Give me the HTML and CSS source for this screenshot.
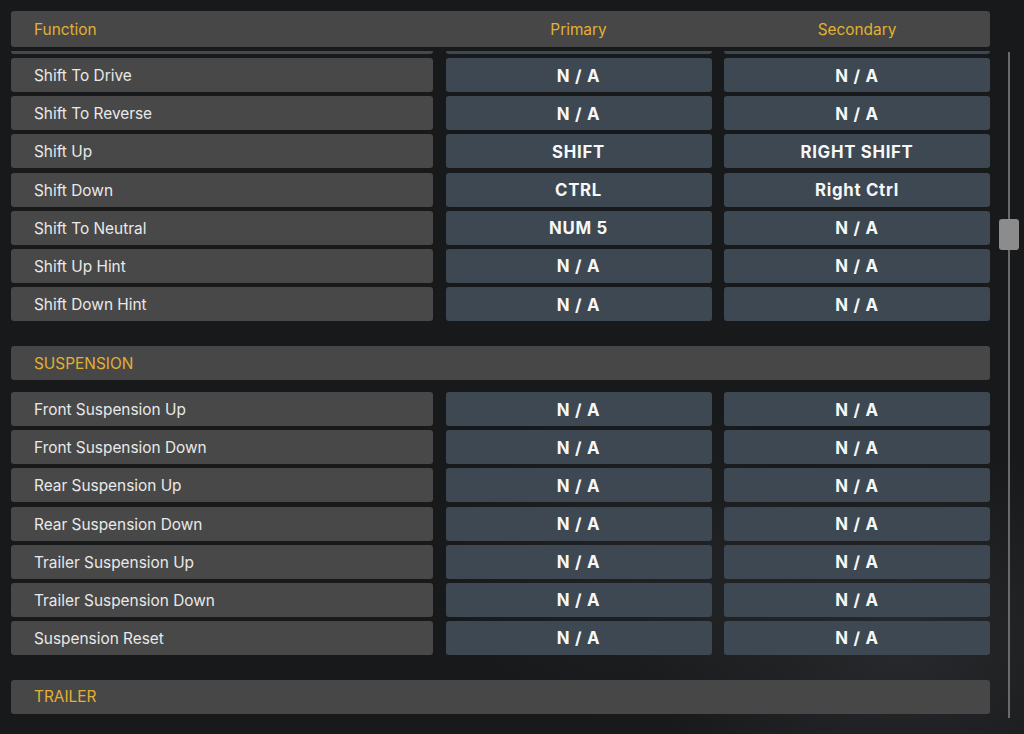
FILE: index.html
```html
<!DOCTYPE html>
<html>
<head>
<meta charset="utf-8">
<link rel="stylesheet" href="styles.css">
</head>
<body>
<div class="page">
  <div class="main">
    <div class="head grid">
      <div class="h-func">Function</div>
      <div class="h-key">Primary</div>
      <div class="h-key">Secondary</div>
    </div>
    <div class="viewport">
      <div class="list">
        <div class="row grid"><div class="fn"></div><div class="key"></div><div class="key"></div></div>
        <div class="row grid"><div class="fn">Shift To Drive</div><div class="key">N / A</div><div class="key">N / A</div></div>
        <div class="row grid"><div class="fn">Shift To Reverse</div><div class="key">N / A</div><div class="key">N / A</div></div>
        <div class="row grid"><div class="fn">Shift Up</div><div class="key">SHIFT</div><div class="key">RIGHT SHIFT</div></div>
        <div class="row grid"><div class="fn">Shift Down</div><div class="key">CTRL</div><div class="key">Right Ctrl</div></div>
        <div class="row grid"><div class="fn">Shift To Neutral</div><div class="key">NUM 5</div><div class="key">N / A</div></div>
        <div class="row grid"><div class="fn">Shift Up Hint</div><div class="key">N / A</div><div class="key">N / A</div></div>
        <div class="row grid"><div class="fn">Shift Down Hint</div><div class="key">N / A</div><div class="key">N / A</div></div>
        <div class="section">SUSPENSION</div>
        <div class="row grid"><div class="fn">Front Suspension Up</div><div class="key">N / A</div><div class="key">N / A</div></div>
        <div class="row grid"><div class="fn">Front Suspension Down</div><div class="key">N / A</div><div class="key">N / A</div></div>
        <div class="row grid"><div class="fn">Rear Suspension Up</div><div class="key">N / A</div><div class="key">N / A</div></div>
        <div class="row grid"><div class="fn">Rear Suspension Down</div><div class="key">N / A</div><div class="key">N / A</div></div>
        <div class="row grid"><div class="fn">Trailer Suspension Up</div><div class="key">N / A</div><div class="key">N / A</div></div>
        <div class="row grid"><div class="fn">Trailer Suspension Down</div><div class="key">N / A</div><div class="key">N / A</div></div>
        <div class="row grid"><div class="fn">Suspension Reset</div><div class="key">N / A</div><div class="key">N / A</div></div>
        <div class="section">TRAILER</div>
      </div>
    </div>
  </div>
  <div class="scrollbar">
    <div class="track"></div>
    <div class="thumb"></div>
  </div>
</div>
</body>
</html>
```
FILE: styles.css
```css
html, body {
  margin: 0;
  padding: 0;
  height: 100%;
  overflow: hidden;
}
body {
  background: #18191b;
  background-image:
    radial-gradient(ellipse 260px 200px at 900px 640px, rgba(70,72,76,0.35), rgba(0,0,0,0)),
    radial-gradient(ellipse 200px 160px at 640px 560px, rgba(60,62,66,0.25), rgba(0,0,0,0));
  font-family: "Inter", "Noto Sans", sans-serif;
  color: #ececec;
}
.page {
  display: flex;
  height: 734px;
  padding: 11px 0 0 11px;
  box-sizing: border-box;
}
.main {
  width: 979px;
  display: flex;
  flex-direction: column;
}
.grid {
  display: grid;
  grid-template-columns: 422px 1fr 1fr;
  column-gap: 12.5px;
}
.head {
  height: 36px;
  background: #474747;
  border-radius: 3px;
  align-items: center;
  color: #e2b132;
  font-size: 15.4px;
}
.h-func {
  padding-left: 23px;
}
.h-key {
  text-align: center;
}
.viewport {
  margin-top: 4px;
  flex: 1;
  overflow: hidden;
}
.list {
  margin-top: -31px;
  display: flex;
  flex-direction: column;
}
.row {
  height: 34px;
  margin-bottom: 4.17px;
}
.fn {
  background: #484848;
  border-radius: 3px;
  display: flex;
  align-items: center;
  padding-left: 23px;
  padding-top: 1px;
  font-size: 15.4px;
  color: #e9e9e9;
}
.key {
  background: #3e4852;
  border-radius: 3px;
  display: flex;
  align-items: center;
  justify-content: center;
  padding-top: 1px;
  font-size: 16.8px;
  font-weight: 700;
  letter-spacing: 0.7px;
  color: #f7f7f7;
}
.section {
  height: 34px;
  background: #474747;
  border-radius: 3px;
  display: flex;
  align-items: center;
  padding-left: 23px;
  margin-top: 20.8px;
  margin-bottom: 12px;
  color: #e2b132;
  font-size: 15.4px;
}
.scrollbar {
  position: relative;
  width: 34px;
}
.track {
  position: absolute;
  left: 18px;
  top: 41px;
  height: 666px;
  width: 2px;
  background: #6a6a6a;
}
.thumb {
  position: absolute;
  left: 9px;
  top: 208px;
  width: 20px;
  height: 31px;
  background: #8c8c8c;
  border-radius: 3px;
}
```
